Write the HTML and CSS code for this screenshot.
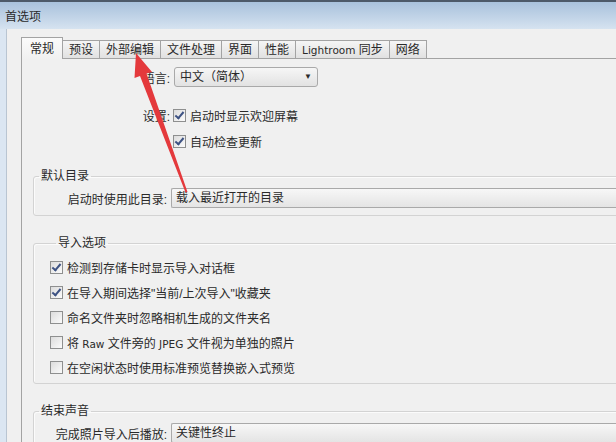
FILE: index.html
```html
<!DOCTYPE html>
<html>
<head>
    <title>首选项</title>
    <link rel="stylesheet" href="styles.css">
</head>
<body>
    <div class="window">
        <div class="titlebar">首选项</div>
        <div class="client">
            <div class="tabs">
                <div class="tab active">常规</div>
                <div class="tab">预设</div>
                <div class="tab">外部编辑</div>
                <div class="tab">文件处理</div>
                <div class="tab">界面</div>
                <div class="tab">性能</div>
                <div class="tab"><span class="latin">Lightroom</span> 同步</div>
                <div class="tab">网络</div>
            </div>
            <div class="panel">
                <div class="row row-lang">
                    <label>语言:</label>
                    <div class="select">中文（简体）<span class="arrow">▼</span></div>
                </div>
                <div class="row row-first">
                    <label>设置:</label>
                    <div class="check"><span class="box on"></span><span>启动时显示欢迎屏幕</span></div>
                </div>
                <div class="row row-next">
                    <label></label>
                    <div class="check"><span class="box on"></span><span>自动检查更新</span></div>
                </div>

                <fieldset class="group group-catalog">
                    <legend>默认目录</legend>
                    <div class="field">
                        <label>启动时使用此目录:</label>
                        <div class="combo">载入最近打开的目录</div>
                    </div>
                </fieldset>

                <fieldset class="group group-import">
                    <legend>导入选项</legend>
                    <div class="check-list">
                        <div class="check"><span class="box on"></span><span>检测到存储卡时显示导入对话框</span></div>
                        <div class="check"><span class="box on"></span><span>在导入期间选择"当前/上次导入"收藏夹</span></div>
                        <div class="check"><span class="box"></span><span>命名文件夹时忽略相机生成的文件夹名</span></div>
                        <div class="check"><span class="box"></span><span>将 <span class="latin">Raw</span> 文件旁的 <span class="latin">JPEG</span> 文件视为单独的照片</span></div>
                        <div class="check"><span class="box"></span><span>在空闲状态时使用标准预览替换嵌入式预览</span></div>
                    </div>
                </fieldset>

                <fieldset class="group group-sound">
                    <legend>结束声音</legend>
                    <div class="field">
                        <label>完成照片导入后播放:</label>
                        <div class="combo">关键性终止</div>
                    </div>
                </fieldset>
            </div>
        </div>

        <!-- red annotation arrow pointing at the 外部编辑 tab -->
        <svg class="annotation" width="616" height="442" viewBox="0 0 616 442">
            <polygon fill="#e4393c" points="136,53 152,72 146.5,73.5 187.5,192 185.5,192.6 140,76 134.5,78"/>
        </svg>
    </div>
</body>
</html>
```

FILE: styles.css
```css
body {
    margin: 0;
    background-color: #f0f0f0;
    font-family: "Liberation Sans", "Noto Sans CJK SC", sans-serif;
    font-size: 12px;
    color: #2a2a2a;
}

.window {
    width: 616px;
    height: 442px;
    display: flex;
    flex-direction: column;
    overflow: hidden;
    position: relative;
}

.titlebar {
    height: 27px;
    flex-shrink: 0;
    border-top: 2px solid #4d5a69;
    background: linear-gradient(#a9c2dc, #c3d5e8 60%, #d6e3f0);
    line-height: 30px;
    padding-left: 5px;
}

.client {
    flex: 1;
    display: flex;
    flex-direction: column;
    min-height: 0;
    border-left: 6px solid #dbe6f2;
    box-shadow: inset 1px 0 0 #b9c5d2;
    padding: 8px 0 0 15px;
}

.tabs {
    display: flex;
    align-items: flex-end;
    height: 21px;
    flex-shrink: 0;
}

.tab {
    height: 17px;
    line-height: 18px;
    padding: 0 6px;
    border: 1px solid #a3a3a3;
    border-bottom: none;
    margin-left: -1px;
    background: linear-gradient(#f5f5f5, #e1e1e1);
}

.tab.active {
    height: 21px;
    line-height: 22px;
    padding: 0 8px;
    margin-left: 0;
    margin-bottom: -1px;
    background: linear-gradient(#fbfbfb, #f0f0f0);
    position: relative;
    z-index: 1;
}

.latin {
    font-family: "DejaVu Sans", sans-serif;
    font-size: 10.5px;
}

.panel {
    flex: 1;
    min-height: 0;
    overflow: hidden;
    border: 1px solid #a3a3a3;
    border-right: none;
    border-bottom: none;
    padding: 8px 0 0 11px;
}

.row {
    display: grid;
    grid-template-columns: 137px 1fr;
    column-gap: 4px;
    align-items: center;
    height: 20px;
}

.row label {
    text-align: right;
}

.row-first {
    margin-top: 18px;
}

.row-next {
    margin-top: 6px;
}

.select {
    width: 137px;
    height: 18px;
    line-height: 18px;
    padding-left: 5px;
    border: 1px solid #a9a9a9;
    border-radius: 3px;
    background: linear-gradient(#f6f6f6, #e2e2e2);
    position: relative;
}

.arrow {
    position: absolute;
    right: 5px;
    top: 0;
    font-size: 8px;
}

.check {
    display: flex;
    align-items: center;
    height: 20px;
    margin-left: -1px;
}

.box {
    width: 11px;
    height: 11px;
    border: 1px solid #8e8f8f;
    background: linear-gradient(135deg, #dcdcdc, #fbfbfb);
    margin-right: 4px;
    position: relative;
}

.box.on::after {
    content: "";
    position: absolute;
    left: 3px;
    top: 0;
    width: 3px;
    height: 7px;
    border: solid #3d5283;
    border-width: 0 2px 2px 0;
    transform: rotate(40deg);
}

.group {
    margin: 0 -10px 0 0;
    padding: 4px 0 7px 0;
    border: 1px solid #d3d3d3;
    border-radius: 3px;
    box-shadow: inset 1px 1px 0 #fbfbfb;
}

.group legend {
    padding: 0 2px;
    margin-left: 5px;
    line-height: 16px;
}

.group-catalog {
    margin-top: 17px;
}

.group-import {
    margin-top: 19px;
    padding: 6px 0 6px 17px;
}

.group-sound {
    margin-top: 19px;
}

.field {
    display: grid;
    grid-template-columns: 133px 1fr;
    column-gap: 4px;
    align-items: center;
}

.field label {
    text-align: right;
}

.combo {
    height: 18px;
    line-height: 18px;
    padding-left: 4px;
    border: 1px solid #a9a9a9;
    border-right: none;
    border-radius: 2px 0 0 2px;
    background: linear-gradient(#f7f7f7, #e4e4e4);
}

.check-list {
    display: flex;
    flex-direction: column;
    gap: 5px;
}

.annotation {
    position: absolute;
    left: 0;
    top: 0;
    pointer-events: none;
}
```
